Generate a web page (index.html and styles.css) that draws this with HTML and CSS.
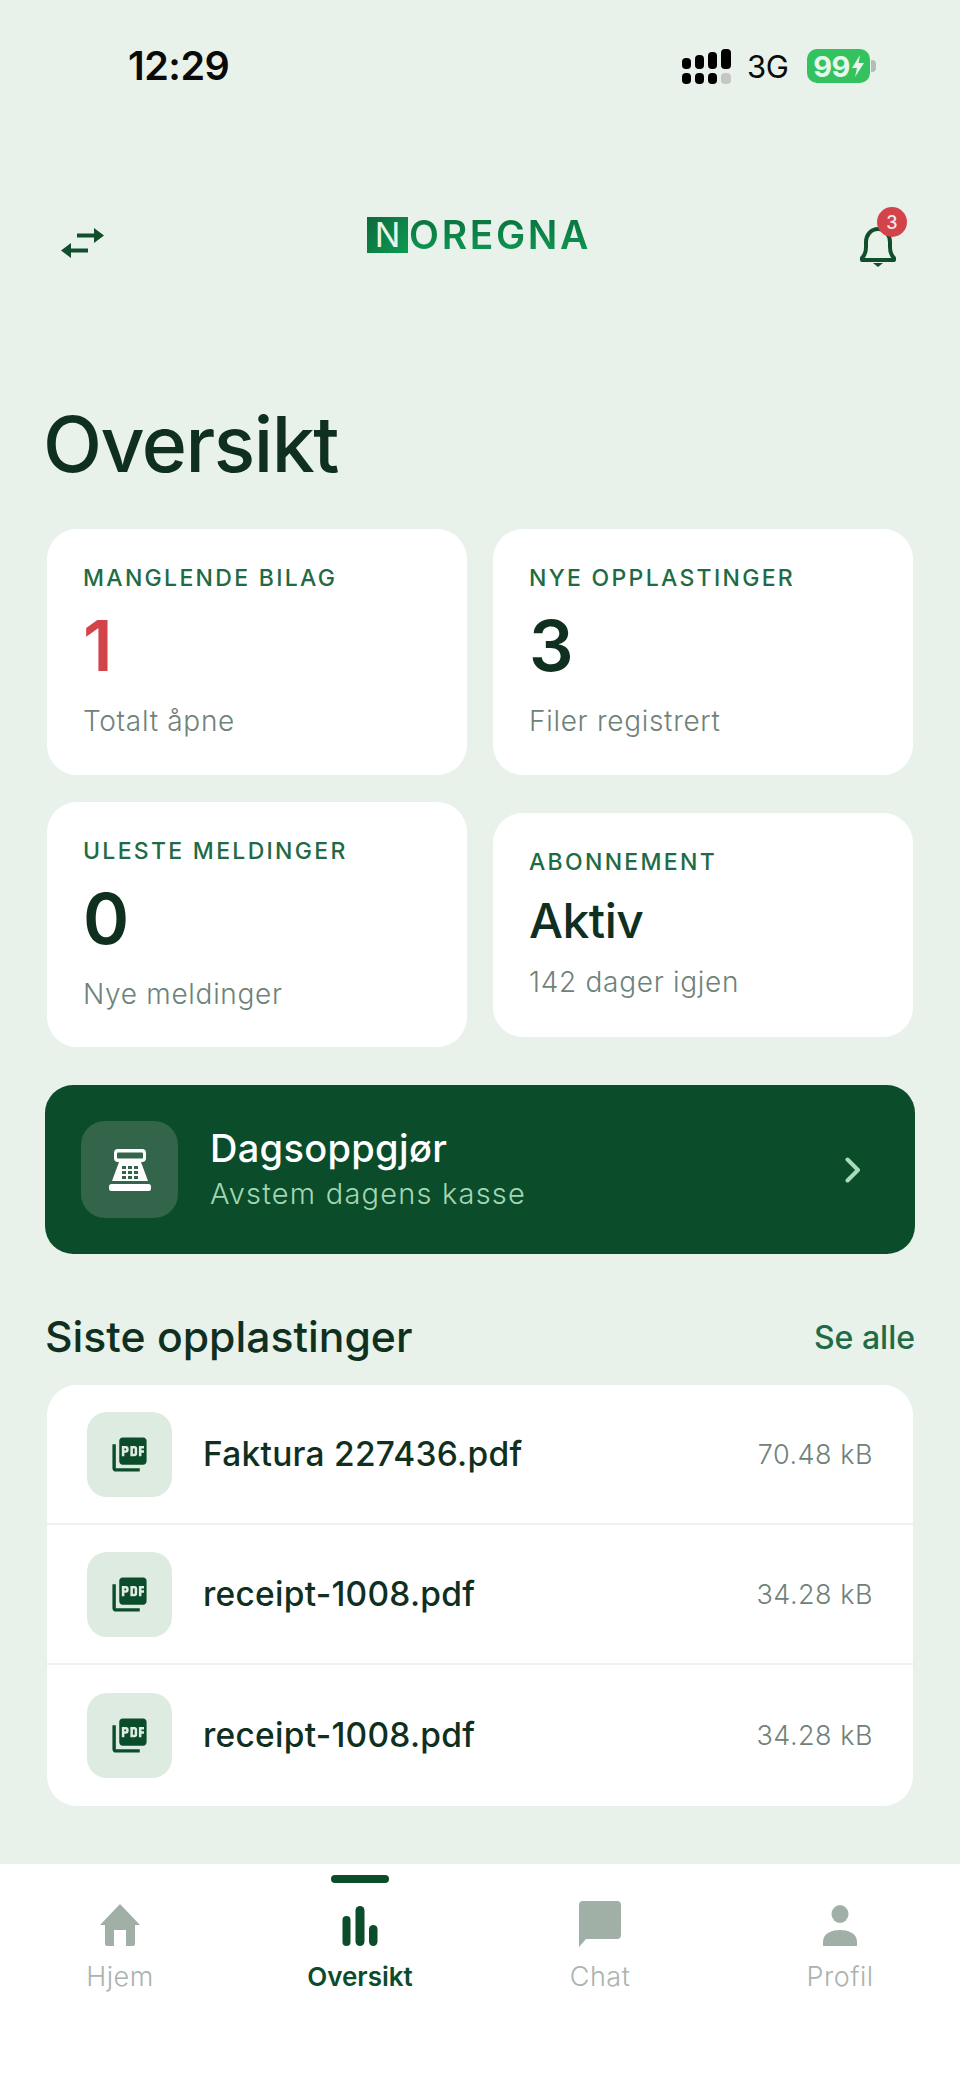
FILE: index.html
```html
<!DOCTYPE html>
<html lang="no">
<head>
<meta charset="utf-8">
<title>Oversikt</title>
<link rel="stylesheet" href="styles.css">
</head>
<body>
<div class="app">
  <div class="status">
    <span class="time">12:29</span>
    <div class="status-right">
      <svg class="signal" viewBox="0 0 49 35" aria-hidden="true">
        <rect x="0" y="9" width="9" height="11" rx="4" fill="#000"/><rect x="13" y="6" width="9" height="14" rx="4" fill="#000"/><rect x="26" y="3" width="9" height="17" rx="4" fill="#000"/><rect x="39" y="0" width="10" height="20" rx="4" fill="#000"/>
        <rect x="0" y="24" width="9" height="11" rx="4" fill="#000"/><rect x="13" y="24" width="9" height="11" rx="4" fill="#000"/><rect x="26" y="24" width="9" height="11" rx="4" fill="#000"/><rect x="39" y="24" width="10" height="11" rx="4" fill="#c4c8c5"/>
      </svg>
      <span class="net">3G</span>
      <div class="battery"><span class="battery-text">99</span><svg class="bolt" viewBox="0 0 12 22" aria-hidden="true"><path d="M8 0 0 13h5l-2 9 9-14H6.500z" fill="#e8f5ec"/></svg></div>
      <span class="nub"></span>
    </div>
  </div>

  <header class="top">
    <svg class="swap" viewBox="0 0 43 30" aria-hidden="true"><path d="M16 5.500h17V0l10 7.500L33 15V9.500H16zM27 20.500H10V15L0 22.500 10 30v-5.500h17z" fill="#0f4f2d"/></svg>
    <div class="logo"><span class="logo-box">N</span><span class="logo-text">OREGNA</span></div>
    <div class="bell-wrap">
      <svg class="bell" viewBox="0 0 38 40" aria-hidden="true"><path d="M3 31c3-3 4-6 4-11v-5C7 8 12 2 19 2s12 6 12 13v5c0 5 1 8 4 11v2H3z" fill="none" stroke="#0f4f2d" stroke-width="4" stroke-linejoin="round"/><path d="M14 36h10l-5 4z" fill="#0f4f2d"/></svg>
      <span class="badge">3</span>
    </div>
  </header>

  <main class="main">
    <h1 class="title">Oversikt</h1>
    <section class="grid">
      <article class="card">
        <div class="label">MANGLENDE BILAG</div>
        <div class="value value-red">1</div>
        <div class="sub">Totalt åpne</div>
      </article>
      <article class="card">
        <div class="label">NYE OPPLASTINGER</div>
        <div class="value">3</div>
        <div class="sub">Filer registrert</div>
      </article>
      <article class="card">
        <div class="label">ULESTE MELDINGER</div>
        <div class="value">0</div>
        <div class="sub">Nye meldinger</div>
      </article>
      <article class="card card-small">
        <div class="label">ABONNEMENT</div>
        <div class="value value-small">Aktiv</div>
        <div class="sub">142 dager igjen</div>
      </article>
    </section>

    <section class="banner">
      <div class="banner-icon">
        <svg viewBox="0 0 44 42" class="register" aria-hidden="true">
          <path fill-rule="evenodd" d="M10 0h24a4 4 0 0 1 4 4v5a4 4 0 0 1-4 4h-1l7 19H4l7-19h-1a4 4 0 0 1-4-4V4a4 4 0 0 1 4-4zm0 3.500a1 1 0 0 0-1 1V8.500a1 1 0 0 0 1 1h24a1 1 0 0 0 1-1V4.500a1 1 0 0 0-1-1z" fill="#fff"/>
          <rect x="1" y="35" width="42" height="7" rx="2.500" fill="#fff"/>
          <g fill="#326549"><rect x="14" y="17" width="4" height="3"/><rect x="20" y="17" width="4" height="3"/><rect x="26" y="17" width="4" height="3"/><rect x="14" y="22" width="4" height="3"/><rect x="20" y="22" width="4" height="3"/><rect x="26" y="22" width="4" height="3"/><rect x="14" y="27" width="4" height="3"/><rect x="20" y="27" width="4" height="3"/><rect x="26" y="27" width="4" height="3"/></g>
        </svg>
      </div>
      <div class="banner-text">
        <div class="banner-title">Dagsoppgjør</div>
        <div class="banner-sub">Avstem dagens kasse</div>
      </div>
      <svg class="chevron" viewBox="0 0 16 26" aria-hidden="true"><path d="M2.500 2.500 13 13 2.500 23.500" fill="none" stroke="#a9dcb9" stroke-width="4" stroke-linecap="round" stroke-linejoin="round"/></svg>
    </section>

    <div class="section-head">
      <h2 class="section-title">Siste opplastinger</h2>
      <span class="see-all">Se alle</span>
    </div>

    <section class="list">
      <div class="row">
        <div class="file-icon"><svg viewBox="0 0 24 24" aria-hidden="true"><path d="M20 2H8c-1.100 0-2 .9-2 2v12c0 1.100.9 2 2 2h12c1.100 0 2-.9 2-2V4c0-1.100-.9-2-2-2zm-8.500 7.500c0 .83-.67 1.500-1.500 1.500H9v2H7.500V7H10c.83 0 1.500.67 1.500 1.500v1zm5 2c0 .83-.67 1.500-1.500 1.500h-2.500V7H15c.83 0 1.500.67 1.500 1.500v3zm4-3H19v1h1.500V11H19v2h-1.500V7h3v1.500zM9 9.500h1v-1H9v1zM4 6H2v14c0 1.100.9 2 2 2h14v-2H4V6zm10 5.500h1v-3h-1v3z"/></svg></div>
        <span class="file-name">Faktura 227436.pdf</span>
        <span class="file-size">70.48 kB</span>
      </div>
      <div class="row">
        <div class="file-icon"><svg viewBox="0 0 24 24" aria-hidden="true"><path d="M20 2H8c-1.100 0-2 .9-2 2v12c0 1.100.9 2 2 2h12c1.100 0 2-.9 2-2V4c0-1.100-.9-2-2-2zm-8.500 7.500c0 .83-.67 1.500-1.500 1.500H9v2H7.500V7H10c.83 0 1.500.67 1.500 1.500v1zm5 2c0 .83-.67 1.500-1.500 1.500h-2.500V7H15c.83 0 1.500.67 1.500 1.500v3zm4-3H19v1h1.500V11H19v2h-1.500V7h3v1.500zM9 9.500h1v-1H9v1zM4 6H2v14c0 1.100.9 2 2 2h14v-2H4V6zm10 5.500h1v-3h-1v3z"/></svg></div>
        <span class="file-name">receipt-1008.pdf</span>
        <span class="file-size">34.28 kB</span>
      </div>
      <div class="row">
        <div class="file-icon"><svg viewBox="0 0 24 24" aria-hidden="true"><path d="M20 2H8c-1.100 0-2 .9-2 2v12c0 1.100.9 2 2 2h12c1.100 0 2-.9 2-2V4c0-1.100-.9-2-2-2zm-8.500 7.500c0 .83-.67 1.500-1.500 1.500H9v2H7.500V7H10c.83 0 1.500.67 1.500 1.500v1zm5 2c0 .83-.67 1.500-1.500 1.500h-2.500V7H15c.83 0 1.500.67 1.500 1.500v3zm4-3H19v1h1.500V11H19v2h-1.500V7h3v1.500zM9 9.500h1v-1H9v1zM4 6H2v14c0 1.100.9 2 2 2h14v-2H4V6zm10 5.500h1v-3h-1v3z"/></svg></div>
        <span class="file-name">receipt-1008.pdf</span>
        <span class="file-size">34.28 kB</span>
      </div>
    </section>
  </main>

  <nav class="nav">
    <div class="tab">
      <svg class="tab-icon" viewBox="0 0 40 50" aria-hidden="true"><path d="M20 7 0 28h5v19a2 2 0 0 0 2 2h7V33h12v16h7a2 2 0 0 0 2-2V28h5z" fill="#a0b0a6" transform="translate(0 -3)"/></svg>
      <span class="tab-label">Hjem</span>
    </div>
    <div class="tab tab-active">
      <span class="indicator"></span>
      <svg class="tab-icon" viewBox="0 0 40 50" aria-hidden="true"><rect x="2.500" y="16" width="8" height="30" rx="4" fill="#0b4d2a"/><rect x="15.500" y="6" width="9" height="40" rx="4.500" fill="#0b4d2a"/><rect x="29" y="25" width="8.500" height="21" rx="4.200" fill="#0b4d2a"/></svg>
      <span class="tab-label">Oversikt</span>
    </div>
    <div class="tab">
      <svg class="tab-icon" viewBox="0 0 42 50" aria-hidden="true"><path d="M4 1h34a4 4 0 0 1 4 4v30a4 4 0 0 1-4 4H7l-7 8V5a4 4 0 0 1 4-4z" fill="#a0b0a6"/></svg>
      <span class="tab-label">Chat</span>
    </div>
    <div class="tab">
      <svg class="tab-icon" viewBox="0 0 40 50" aria-hidden="true"><ellipse cx="20" cy="14" rx="8.500" ry="9" fill="#a0b0a6"/><path d="M3 46v-4c0-9 9-12 17-12s17 3 17 12v4z" fill="#a0b0a6"/></svg>
      <span class="tab-label">Profil</span>
    </div>
  </nav>
</div>
</body>
</html>
```

FILE: styles.css
```css
* { box-sizing: border-box; }
html, body { margin: 0; padding: 0; }
body { font-family: "Inter", "Noto Sans", sans-serif; color: #10301f; background: #e8f2ea; }
.app { width: 960px; height: 2081px; display: flex; flex-direction: column; background: #e8f2ea; overflow: hidden; }

.status { height: 132px; flex: none; display: flex; justify-content: space-between; align-items: flex-start; padding: 40px 84px 0 128px; }
.time { font-size: 39.500px; line-height: 52px; font-weight: 600; letter-spacing: -0.500px; color: #0a0a0a; }
.status-right { display: flex; align-items: center; height: 52px; }
.signal { width: 49px; height: 35px; margin-right: 16px; }
.net { font-size: 31px; font-weight: 400; letter-spacing: -0.300px; color: #0a0a0a; width: 60px; }
.battery { width: 63px; height: 34px; background: #34c25e; border-radius: 10px; display: flex; align-items: center; justify-content: center; gap: 2px; }
.battery-text { font-weight: 700; font-size: 29px; color: #e8f5ec; line-height: 1; letter-spacing: -0.500px; }
.bolt { width: 12px; height: 22px; }
.nub { width: 5px; height: 12px; margin-left: 1px; background: #b5bdb8; border-radius: 0 4px 4px 0; }

.top { height: 80px; margin-top: 68px; flex: none; display: flex; align-items: center; justify-content: space-between; padding: 0 47px 0 61px; }
.swap { width: 43px; height: 30px; margin-top: 6px; }
.logo { display: flex; align-items: center; margin-left: -5px; margin-top: -10px; }
.logo-box { width: 41px; height: 36px; display: flex; align-items: center; justify-content: center; background: linear-gradient(135deg, #0c6a3a, #0e9a52); color: #e9f5ec; font-size: 34px; font-weight: 400; line-height: 1; }
.logo-text { font-size: 39px; line-height: 1.100; font-weight: 600; letter-spacing: 2.600px; padding-left: 1px; background: linear-gradient(180deg, #0a6f3c, #0f9a55); -webkit-background-clip: text; background-clip: text; color: transparent; }
.bell-wrap { position: relative; width: 54px; height: 54px; display: flex; align-items: flex-end; }
.bell { width: 38px; height: 40px; }
.badge { position: absolute; left: 18px; top: -6px; width: 30px; height: 30px; border-radius: 50%; background: #d2444a; color: #f6e6e6; font-size: 18px; font-weight: 500; display: flex; align-items: center; justify-content: center; }

.main { flex: 1; padding: 0 45px; }
.title { margin: 118px 0 0 -2px; height: 131px; font-size: 77px; line-height: 92px; font-weight: 500; letter-spacing: -1.500px; color: #10301f; }

.grid { display: grid; grid-template-columns: 420px 420px; column-gap: 26px; row-gap: 27px; padding: 0 2px; grid-template-rows: 246px 245px; }
.card { background: #fff; border-radius: 30px; padding: 34px 36px 0; }
.card-small { align-self: center; height: 224px; }
.label { font-size: 23px; line-height: 31px; font-weight: 500; letter-spacing: 2.300px; color: #1f6b45; }
.value { margin-top: 8px; font-size: 70px; line-height: 88px; font-weight: 600; color: #10301f; }
.value-red { color: #d2444a; }
.value-small { margin-top: 13px; font-size: 48px; line-height: 60px; font-weight: 550; letter-spacing: -0.500px; }
.sub { margin-top: 11px; font-size: 28px; line-height: 40px; font-weight: 300; letter-spacing: 0.700px; color: #6f827a; }

.banner { margin-top: 38px; height: 169px; border-radius: 28px; background: #0b4d2a; display: flex; align-items: center; padding: 0 54px 0 36px; }
.banner-icon { width: 97px; height: 97px; border-radius: 24px; background: #326549; display: flex; align-items: center; justify-content: center; flex: none; }
.register { width: 44px; height: 42px; }
.banner-text { margin-left: 32px; flex: 1; }
.banner-title { font-size: 38px; line-height: 46px; font-weight: 500; letter-spacing: 0.300px; color: #fff; }
.banner-sub { margin-top: 3px; font-size: 29px; line-height: 40px; font-weight: 300; letter-spacing: 1.200px; color: #a2d7b4; }
.chevron { width: 16px; height: 26px; }

.section-head { margin-top: 60px; height: 46px; display: flex; align-items: center; justify-content: space-between; }
.section-title { margin: 0; font-size: 42.700px; line-height: 46px; font-weight: 500; color: #10301f; }
.see-all { font-size: 32px; font-weight: 500; color: #1f6b45; }

.list { margin: 25px 2px 0; height: 421px; background: #fff; border-radius: 30px; overflow: hidden; }
.row { height: 140px; display: flex; align-items: center; padding: 0 40px; border-bottom: 2px solid #eef2ef; }
.row:last-child { border-bottom: 0; }
.file-icon { width: 85px; height: 85px; border-radius: 20px; background: #ddebe1; display: flex; align-items: center; justify-content: center; flex: none; }
.file-icon svg { width: 41px; height: 41px; fill: #0b4d2a; }
.file-name { margin-left: 31px; flex: 1; font-size: 33.500px; font-weight: 500; letter-spacing: 0.250px; color: #10301f; }
.file-size { font-size: 27px; font-weight: 300; letter-spacing: 0.500px; color: #6f827a; }

.nav { height: 217px; flex: none; background: #fff; display: grid; grid-template-columns: repeat(4, 240px); }
.tab { position: relative; display: flex; flex-direction: column; align-items: center; padding-top: 36px; }
.tab-icon { height: 50px; width: 42px; }
.tab-label { margin-top: 10px; font-size: 27px; line-height: 34px; font-weight: 300; letter-spacing: 0.500px; color: #a9b4ae; }
.tab-active .tab-label { font-size: 26px; letter-spacing: 0; font-weight: 600; color: #0b4d2a; }
.indicator { position: absolute; top: 11px; left: 91px; width: 58px; height: 8px; border-radius: 4px; background: #0b4d2a; }
```
